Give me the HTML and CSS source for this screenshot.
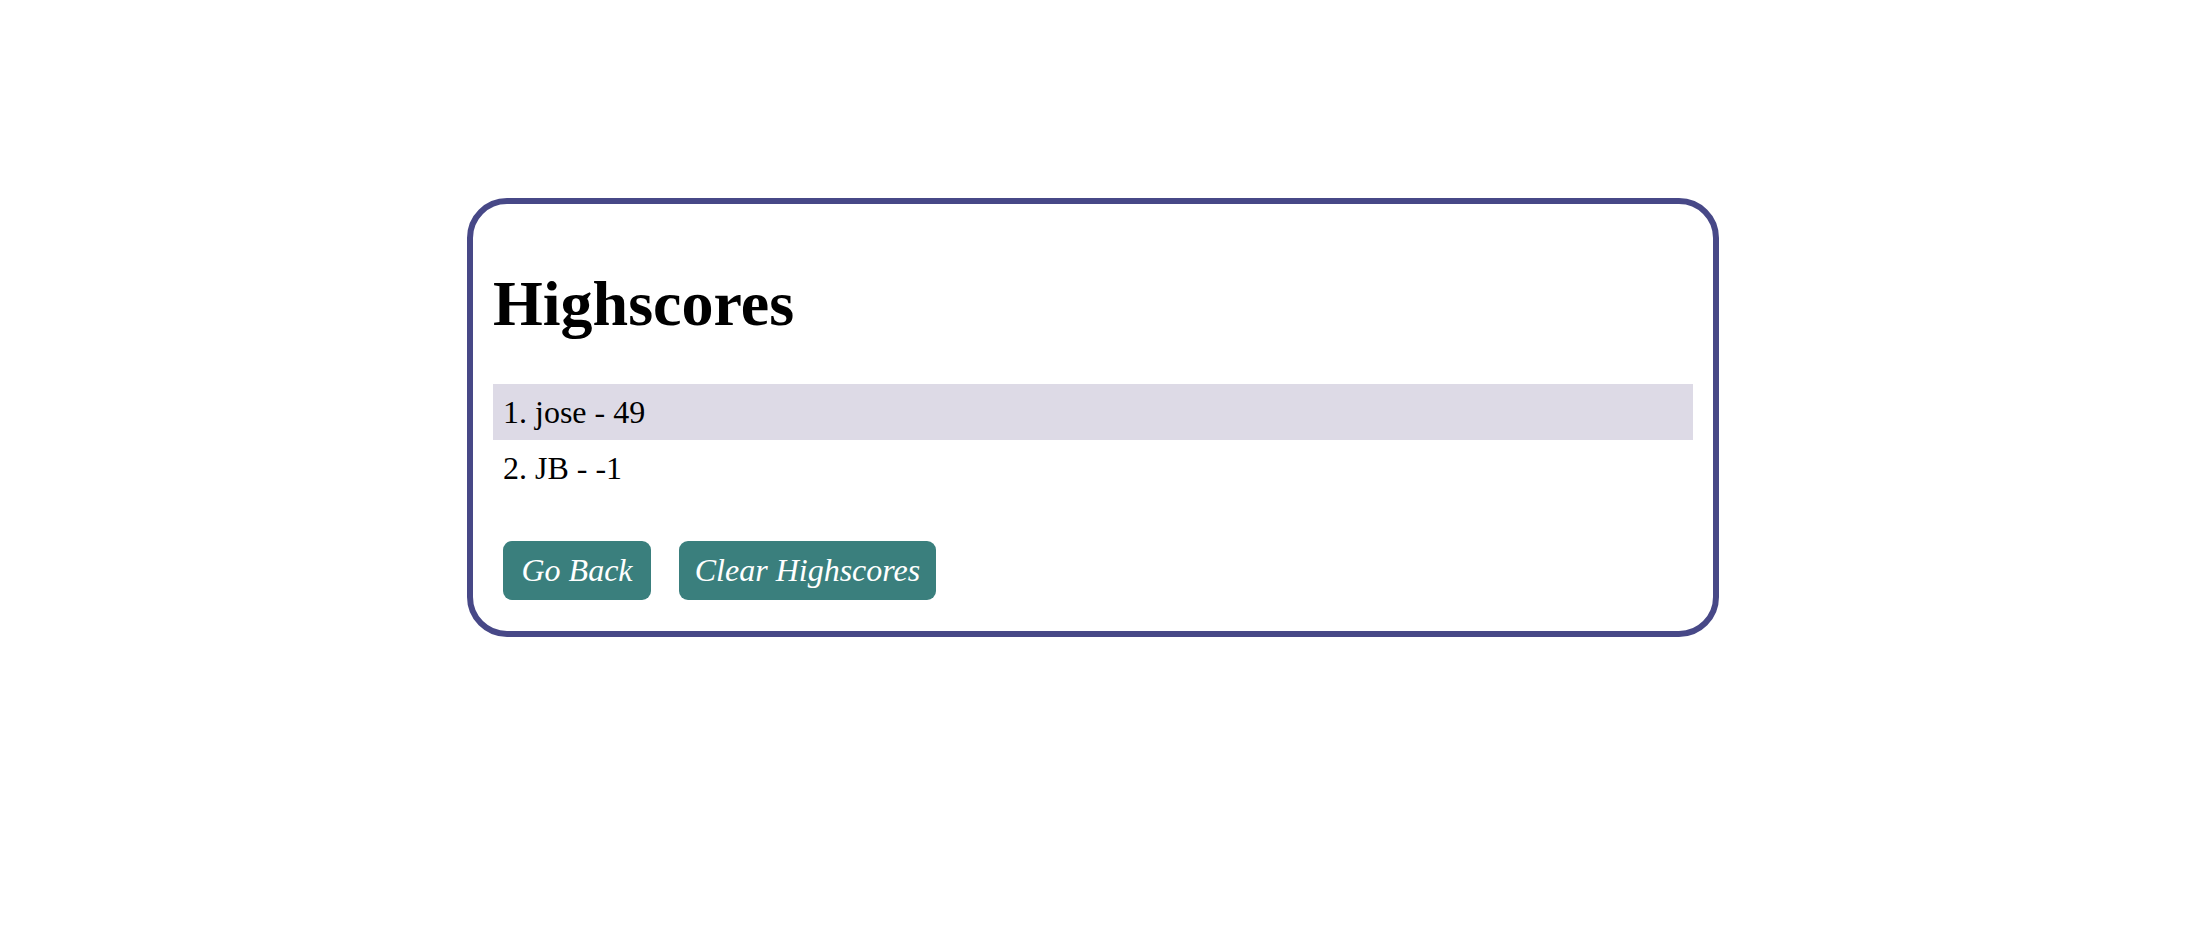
FILE: index.html
```html
<!DOCTYPE html>
<html lang="en">
<head>
<meta charset="utf-8">
<title>Highscores</title>
<link rel="stylesheet" href="styles.css">
</head>
<body>
  <main class="card">
    <h1 class="title">Highscores</h1>
    <ol class="scores">
      <li class="score score-odd">1. jose - 49</li>
      <li class="score">2. JB - -1</li>
    </ol>
    <div class="actions">
      <button class="btn btn-back">Go Back</button>
      <button class="btn btn-clear">Clear Highscores</button>
    </div>
  </main>
</body>
</html>
```

FILE: styles.css
```css
html, body {
  margin: 0;
  padding: 0;
  background: #ffffff;
}

body {
  font-family: "Liberation Serif", "Times New Roman", serif;
  font-size: 32px;
  line-height: 1.15;
  color: #000000;
  padding-top: 198px;
}

.card {
  box-sizing: border-box;
  width: 1252px;
  margin: 0 auto;
  border: 6px solid #474887;
  border-radius: 40px;
  padding: 20px 20px 21px;
}

.title {
  font-size: 64px;
  font-weight: bold;
  line-height: 1.15;
  margin: 43px 0;
}

.scores {
  list-style: none;
  margin: 0 0 34px 0;
  padding: 0;
}

.score {
  padding: 10px 10px;
  line-height: 1.15;
}

.score-odd {
  background: #dddae6;
}

.actions {
  display: flex;
  gap: 8px;
}

.btn {
  box-sizing: border-box;
  margin: 10px;
  height: 59px;
  padding: 0;
  border: none;
  border-radius: 9px;
  background: #3a7f7d;
  color: #ffffff;
  font-family: "Liberation Serif", "Times New Roman", serif;
  font-style: italic;
  font-size: 32px;
  line-height: 59px;
  text-align: center;
  cursor: pointer;
}

.btn-back {
  width: 148px;
}

.btn-clear {
  width: 257px;
}
```
